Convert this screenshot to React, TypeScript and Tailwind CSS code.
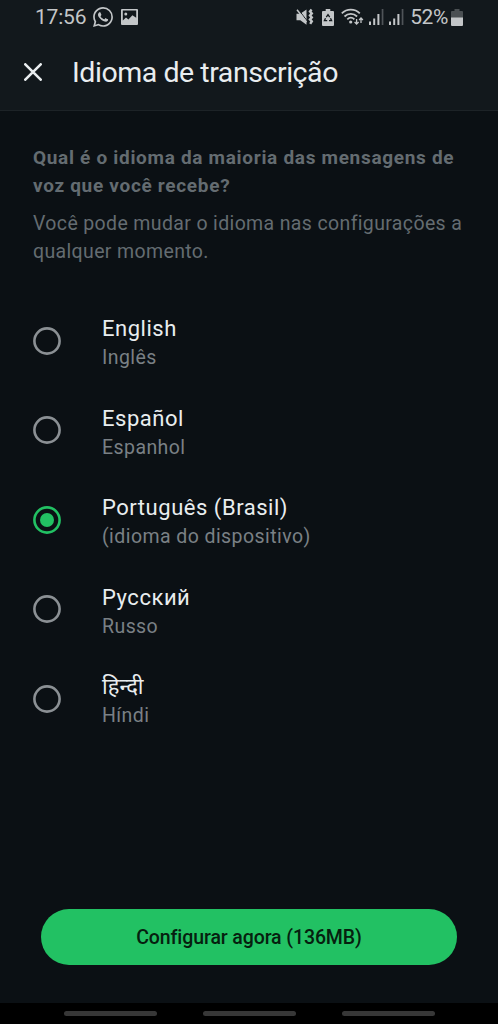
import React from "react";

type Language = { name: string; label: string; hindi?: boolean };

const languages: Language[] = [
  { name: "English", label: "Inglês" },
  { name: "Español", label: "Espanhol" },
  { name: "Português (Brasil)", label: "(idioma do dispositivo)" },
  { name: "Русский", label: "Russo" },
  { name: "हिन्दी", label: "Híndi", hindi: true },
];

function WhatsAppIcon() {
  return (
    <svg className="ml-[7px] h-5 w-5" viewBox="0 0 24 24" fill="currentColor">
      <path d="M17.472 14.382c-.297-.149-1.758-.867-2.03-.967-.273-.099-.471-.148-.67.15-.197.297-.767.966-.94 1.164-.173.199-.347.223-.644.075-.297-.15-1.255-.463-2.39-1.475-.883-.788-1.48-1.761-1.653-2.059-.173-.297-.018-.458.13-.606.134-.133.298-.347.446-.52.149-.174.198-.298.298-.497.099-.198.05-.371-.025-.52-.075-.149-.669-1.612-.916-2.207-.242-.579-.487-.5-.669-.51-.173-.008-.371-.01-.57-.01-.198 0-.52.074-.792.372-.272.297-1.04 1.016-1.04 2.479 0 1.462 1.065 2.875 1.213 3.074.149.198 2.096 3.2 5.077 4.487.709.306 1.262.489 1.694.625.712.227 1.36.195 1.871.118.571-.085 1.758-.719 2.006-1.413.248-.694.248-1.289.173-1.413-.074-.124-.272-.198-.57-.347m-5.421 7.403h-.004a9.87 9.87 0 0 1-5.031-1.378l-.361-.214-3.741.982.998-3.648-.235-.374a9.86 9.86 0 0 1-1.51-5.26c.001-5.45 4.436-9.884 9.888-9.884 2.64 0 5.122 1.03 6.988 2.898a9.825 9.825 0 0 1 2.893 6.994c-.003 5.45-4.437 9.884-9.885 9.884m8.413-18.297A11.815 11.815 0 0 0 12.05 0C5.495 0 .16 5.335.157 11.892c0 2.096.547 4.142 1.588 5.945L.057 24l6.305-1.654a11.882 11.882 0 0 0 5.683 1.448h.005c6.554 0 11.89-5.335 11.893-11.893a11.821 11.821 0 0 0-3.48-8.413Z" />
    </svg>
  );
}

function GalleryIcon() {
  return (
    <svg className="ml-[8px] h-4 w-[17px]" viewBox="0 0 17 16">
      <path fill="currentColor" fillRule="evenodd" d="M1 0h15a1 1 0 0 1 1 1v14a1 1 0 0 1-1 1H1a1 1 0 0 1-1-1V1a1 1 0 0 1 1-1Zm.8 1.6v9.8L5 8.6l2.4 1.8 4-4.2 3.8 2.6V1.6ZM4.8 3.4a1.5 1.5 0 1 1 0 3 1.5 1.5 0 0 1 0-3Z" />
    </svg>
  );
}

function MuteVibrateIcon() {
  return (
    <svg className="h-[18px] w-[18px]" viewBox="0 0 18 18" fill="none" stroke="currentColor">
      <path fill="currentColor" stroke="none" d="M.5 5.8h3.8l6.2-4.4v15.4l-6.2-4.6H.5Z" />
      <path d="m2.2 1.2 9 11.8" stroke="#12181c" strokeWidth="1" />
      <path d="M1 1.8 10.5 14" strokeWidth="1.5" />
      <path d="m15.6 1.4-1.6 2 1.8 2-1.8 2 1.8 2-1.8 2 1.8 2-1.6 2.4" strokeWidth="2.4" />
    </svg>
  );
}

function BatterySaverIcon() {
  return (
    <svg className="ml-[8px] h-[17px] w-3" viewBox="0 0 12 17">
      <path fill="currentColor" d="M3.7 0h4.6v2H11a1 1 0 0 1 1 1v13a1 1 0 0 1-1 1H1a1 1 0 0 1-1-1V3a1 1 0 0 1 1-1h2.7Z" />
      <path fill="none" stroke="#12181c" strokeWidth="1.3" d="m4.3 8.2 1.7-2.5 1.7 2.5M8.5 9.2l1.1 2.5H7M5.2 11.7H2.4l1.1-2.5" />
    </svg>
  );
}

function WifiIcon() {
  return (
    <svg className="ml-[7px] h-[18px] w-[23px]" viewBox="0 0 23 18" fill="none" stroke="currentColor" strokeWidth="1.8">
      <path d="M.8 5.4c5-5 13-5 18 0M3.5 8.5c3.6-3.5 9-3.5 12.6 0M6.3 11.3c2.1-2 5-2 7.1 0" />
      <circle cx="9.7" cy="14" r="1.6" fill="currentColor" stroke="none" />
      <path d="M15.6 11v5M13.6 14l2 2 2-2M20 15v-5M18.1 12l1.9-2 1.9 2" strokeWidth="1.3" />
    </svg>
  );
}

function SignalIcon() {
  return (
    <svg className="h-4 w-[15px]" viewBox="0 0 15 16" fill="currentColor">
      <path d="M0 12.5h2V16H0ZM4.2 9.5h2V16h-2ZM8.4 5h2v11h-2Z" />
      <path d="M12.7 0h1.7v16h-1.7Z" opacity=".35" />
    </svg>
  );
}

function BatteryIcon() {
  return (
    <svg className="ml-[3px] h-[17px] w-3" viewBox="0 0 12 17" fill="currentColor">
      <path d="M3.5 0h5v2H11a1 1 0 0 1 1 1v6H0V3a1 1 0 0 1 1-1h2.5Z" opacity=".32" />
      <path d="M0 8.5h12V16a1 1 0 0 1-1 1H1a1 1 0 0 1-1-1Z" />
    </svg>
  );
}

function Radio({ selected }: { selected: boolean }) {
  return (
    <svg
      className={selected ? "h-7 w-7 shrink-0 text-[#22c163]" : "h-7 w-7 shrink-0 text-[#8b9094]"}
      viewBox="0 0 28 28"
      fill="none"
    >
      <circle cx="14" cy="14" r="12.6" stroke="currentColor" strokeWidth="2.6" />
      {selected && <circle cx="14" cy="14" r="7" fill="currentColor" />}
    </svg>
  );
}

export default function App() {
  const [selected, setSelected] = React.useState(2);

  return (
    <div className="flex h-[1024px] w-[498px] flex-col overflow-hidden bg-[#0b1014] font-['Roboto','Noto_Sans',sans-serif]">
      <header className="h-[111px] shrink-0 border-b border-[#1d2327] bg-[#12181c]">
        <div className="flex h-[34px] items-center pr-[35px] pl-[35px] text-[#c3c6c8]">
          <span className="text-[21px] leading-6 tracking-[-0.2px]">17:56</span>
          <WhatsAppIcon />
          <GalleryIcon />
          <div className="ml-auto flex items-center">
            <MuteVibrateIcon />
            <BatterySaverIcon />
            <WifiIcon />
            <span className="ml-[5px] flex gap-[5px]">
              <SignalIcon />
              <SignalIcon />
            </span>
            <span className="ml-[6px] text-[21px] leading-6 tracking-[-0.4px]">52%</span>
            <BatteryIcon />
          </div>
        </div>
        <div className="flex h-[78px] items-center pl-6">
          <svg className="mb-[2px] h-[18px] w-[18px] text-[#e9edef]" viewBox="0 0 18 18" fill="none" stroke="currentColor" strokeWidth="2.6" strokeLinecap="round">
            <path d="m1.3 1.3 15.4 15.4M16.7 1.3 1.3 16.7" />
          </svg>
          <h1 className="ml-[30px] text-[28.5px] leading-9 tracking-[-0.45px] text-[#e9edef]">Idioma de transcrição</h1>
        </div>
      </header>

      <main className="flex flex-1 flex-col">
        <section className="pt-[33px] pl-[33px] text-[19px] leading-7 whitespace-nowrap text-[#646c71]">
          <p className="font-bold tracking-[0.69px]">
            Qual é o idioma da maioria das mensagens de
            <br />
            voz que você recebe?
          </p>
          <p className="mt-[10px] text-[19.5px] tracking-[0.36px]">
            Você pode mudar o idioma nas configurações a
            <br />
            qualquer momento.
          </p>
        </section>

        <div role="radiogroup" className="mt-[30px] flex flex-col">
          {languages.map((language, index) => (
            <button
              key={language.label}
              role="radio"
              aria-checked={selected === index}
              onClick={() => setSelected(index)}
              className="flex h-[89.5px] items-center pl-[33px] text-left"
            >
              <Radio selected={selected === index} />
              <span className="ml-[41px] flex flex-col pt-[6px]">
                <span
                  className={
                    language.hindi
                      ? "text-[22px] leading-7 text-[#e9edef]"
                      : "text-[22px] leading-7 tracking-[0.53px] text-[#e9edef]"
                  }
                >
                  {language.name}
                </span>
                <span className="mt-px text-[19.5px] leading-7 tracking-[0.43px] text-[#7a8085]">{language.label}</span>
              </span>
            </button>
          ))}
        </div>

        <button className="mx-[41px] mt-auto mb-[38px] h-14 rounded-full bg-[#22c163] pt-[2px] text-[19.5px] font-medium tracking-[-0.1px] text-[#06200f]">
          Configurar agora (136MB)
        </button>
      </main>

      <nav className="flex h-[21px] shrink-0 items-center justify-center gap-[46px] bg-black">
        <span className="h-[5px] w-[93px] rounded-full bg-[#373737]" />
        <span className="h-[5px] w-[93px] rounded-full bg-[#373737]" />
        <span className="h-[5px] w-[93px] rounded-full bg-[#373737]" />
      </nav>
    </div>
  );
}
